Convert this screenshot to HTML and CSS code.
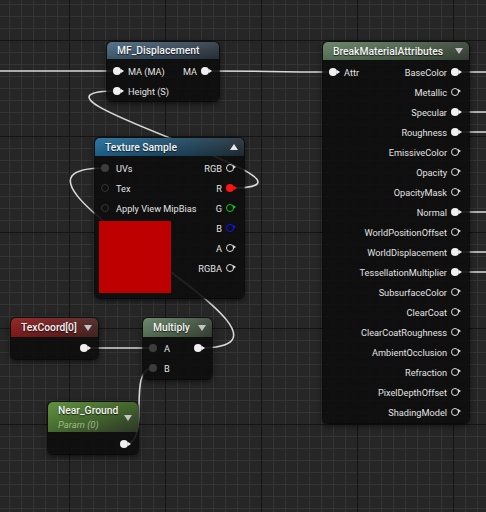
FILE: index.html
```html
<!DOCTYPE html>
<html lang="en">
  <head>
    <meta charset="UTF-8" />
    <title>Material Graph</title>
    <link rel="stylesheet" href="styles.css">
  </head>
  <body>
    <div class="graph">
      <!-- wires, drawn under the nodes -->
      <svg class="wires" width="486" height="512" viewBox="0 0 486 512">
        <g fill="none" stroke="#d9d9d9" stroke-width="1.6">
          <path d="M0 71 H117" />
          <path d="M205 71 C270 71 268 72 333 72" />
          <path d="M455 72 H486 M455 112 H486 M455 132 H486 M455 212 H486 M455 252 H486 M455 272 H486" />
          <path d="M230 188 C360 188 -13 91 117 91" />
          <path d="M199 348 C349 348 -45 168 105 168" />
          <path d="M85 348 H153" />
          <path d="M125 444 C152 444 126 368 153 368" />
        </g>
      </svg>

      <!-- MF_Displacement -->
      <div class="node mf-disp">
        <div class="head head-func"><span>MF_Displacement</span></div>
        <div class="body">
          <div class="row"><span class="pin"></span><span class="lbl">MA (MA)</span><span class="lbl out">MA</span><span class="pin"></span></div>
          <div class="row"><span class="pin"></span><span class="lbl">Height (S)</span></div>
        </div>
      </div>

      <!-- Texture Sample -->
      <div class="node tex-sample">
        <div class="head head-tex"><span>Texture Sample</span><span class="caret up"></span></div>
        <div class="body split">
          <div class="col col-in">
            <div class="row"><span class="pin dim"></span><span class="lbl">UVs</span></div>
            <div class="row"><span class="pin dimring"></span><span class="lbl">Tex</span></div>
            <div class="row"><span class="pin dimring"></span><span class="lbl">Apply View MipBias</span></div>
            <div class="swatch"></div>
          </div>
          <div class="col col-out">
            <div class="row"><span class="lbl">RGB</span><span class="pin hollow"></span></div>
            <div class="row"><span class="lbl">R</span><span class="pin red"></span></div>
            <div class="row"><span class="lbl">G</span><span class="pin hollow green"></span></div>
            <div class="row"><span class="lbl">B</span><span class="pin hollow blue"></span></div>
            <div class="row"><span class="lbl">A</span><span class="pin hollow"></span></div>
            <div class="row"><span class="lbl">RGBA</span><span class="pin hollow"></span></div>
          </div>
        </div>
      </div>

      <!-- BreakMaterialAttributes -->
      <div class="node break-attr">
        <div class="head head-green"><span>BreakMaterialAttributes</span><span class="caret"></span></div>
        <div class="body split tall">
          <div class="col col-in">
            <div class="row"><span class="pin"></span><span class="lbl">Attr</span></div>
          </div>
          <div class="col col-out">
            <div class="row"><span class="lbl">BaseColor</span><span class="pin"></span></div>
            <div class="row"><span class="lbl">Metallic</span><span class="pin hollow"></span></div>
            <div class="row"><span class="lbl">Specular</span><span class="pin"></span></div>
            <div class="row"><span class="lbl">Roughness</span><span class="pin"></span></div>
            <div class="row"><span class="lbl">EmissiveColor</span><span class="pin hollow"></span></div>
            <div class="row"><span class="lbl">Opacity</span><span class="pin hollow"></span></div>
            <div class="row"><span class="lbl">OpacityMask</span><span class="pin hollow"></span></div>
            <div class="row"><span class="lbl">Normal</span><span class="pin"></span></div>
            <div class="row"><span class="lbl">WorldPositionOffset</span><span class="pin hollow"></span></div>
            <div class="row"><span class="lbl">WorldDisplacement</span><span class="pin"></span></div>
            <div class="row"><span class="lbl">TessellationMultiplier</span><span class="pin"></span></div>
            <div class="row"><span class="lbl">SubsurfaceColor</span><span class="pin hollow"></span></div>
            <div class="row"><span class="lbl">ClearCoat</span><span class="pin hollow"></span></div>
            <div class="row"><span class="lbl">ClearCoatRoughness</span><span class="pin hollow"></span></div>
            <div class="row"><span class="lbl">AmbientOcclusion</span><span class="pin hollow"></span></div>
            <div class="row"><span class="lbl">Refraction</span><span class="pin hollow"></span></div>
            <div class="row"><span class="lbl">PixelDepthOffset</span><span class="pin hollow"></span></div>
            <div class="row"><span class="lbl">ShadingModel</span><span class="pin hollow"></span></div>
          </div>
        </div>
      </div>

      <!-- TexCoord[0] -->
      <div class="node tex-coord">
        <div class="head head-red"><span>TexCoord[0]</span><span class="caret"></span></div>
        <div class="body slim">
          <div class="row row-end"><span class="pin"></span></div>
        </div>
      </div>

      <!-- Multiply -->
      <div class="node multiply">
        <div class="head head-green"><span>Multiply</span><span class="caret"></span></div>
        <div class="body slim">
          <div class="row"><span class="pin dim"></span><span class="lbl">A</span><span class="pin push"></span></div>
          <div class="row"><span class="pin dim"></span><span class="lbl">B</span></div>
        </div>
      </div>

      <!-- Near_Ground param -->
      <div class="node near-ground">
        <div class="head head-param">
          <div class="titles">
            <span>Near_Ground</span>
            <span class="sub">Param (0)</span>
          </div>
          <span class="caret"></span>
        </div>
        <div class="body">
          <div class="row row-end"><span class="pin"></span></div>
        </div>
      </div>
    </div>
  </body>
</html>
```

FILE: styles.css
```css
body {
  margin: 0;
  font-family: Roboto, "Liberation Sans", sans-serif;
  background: #262626;
}

/* grid canvas */
.graph {
  position: relative;
  width: 486px;
  height: 512px;
  overflow: hidden;
  background-color: #262626;
  background-image:
    linear-gradient(to right, #151515 1px, transparent 1px),
    linear-gradient(to bottom, #151515 1px, transparent 1px),
    linear-gradient(to right, #343434 1px, transparent 1px),
    linear-gradient(to bottom, #343434 1px, transparent 1px);
  background-size: 96px 96px, 96px 96px, 12px 12px, 12px 12px;
  background-position: 69px 0, 0 40px, 9px 0, 0 4px;
}

.wires {
  position: absolute;
  left: 0;
  top: 0;
}

/* nodes */
.node {
  position: absolute;
  box-sizing: border-box;
  border-radius: 5px;
  background: rgba(13, 13, 13, 0.9);
  box-shadow: 0 0 0 1px rgba(0, 0, 0, 0.5), 0 2px 6px rgba(0, 0, 0, 0.7);
  color: #e2e2e2;
  font-size: 9.2px;
}

.mf-disp { left: 107px; top: 42px; width: 112px; }
.tex-sample { left: 95px; top: 138px; width: 149px; }
.break-attr { left: 323px; top: 42px; width: 146px; }
.tex-coord { left: 11px; top: 318px; width: 87px; }
.multiply { left: 143px; top: 318px; width: 69px; }
.near-ground { left: 48px; top: 402px; width: 90px; }

.head {
  display: flex;
  align-items: center;
  justify-content: space-between;
  height: 18px;
  padding: 0 6px 0 10px;
  border-radius: 5px 5px 0 0;
  font-size: 10.3px;
  font-weight: 500;
  color: #f4f4f4;
  text-shadow: 0 1px 1px rgba(0, 0, 0, 0.7);
}

.head-func {
  height: 17px;
  background:
    linear-gradient(to bottom, rgba(255, 255, 255, 0.1), rgba(0, 0, 0, 0.15)),
    linear-gradient(to right, #46657c, #35495a 60%, #2a353e);
}

.head-tex {
  background:
    linear-gradient(to bottom, rgba(255, 255, 255, 0.08), rgba(0, 0, 0, 0.15)),
    linear-gradient(to right, #1f6c9a, #1e4a66 55%, #232f38);
}

.head-green {
  background:
    linear-gradient(to bottom, rgba(255, 255, 255, 0.08), rgba(0, 0, 0, 0.15)),
    linear-gradient(to right, #62805f, #4b604a 60%, #3a4539);
}

.multiply .head, .tex-coord .head { height: 19px; }

.head-red {
  background:
    linear-gradient(to bottom, rgba(255, 255, 255, 0.06), rgba(0, 0, 0, 0.15)),
    linear-gradient(to right, #8e1c1c, #6a2020 60%, #4a2828);
}

.head-param {
  height: 30px;
  align-items: flex-start;
  padding-top: 2px;
  box-sizing: border-box;
  background: linear-gradient(160deg, #62923f, #42632d 55%, #2c3627);
}

.head-param .caret { margin-top: 11px; }

.titles {
  display: flex;
  flex-direction: column;
  line-height: 14px;
}

.sub {
  font-style: italic;
  font-weight: 400;
  font-size: 9.5px;
  color: #9ab884;
  text-shadow: none;
}

.caret {
  width: 0;
  height: 0;
  border-left: 4.5px solid transparent;
  border-right: 4.5px solid transparent;
  border-top: 6px solid #c4c4c4;
}

.caret.up {
  border-top: 0;
  border-bottom: 6px solid #e8e8e8;
}

/* body and rows */
.body {
  padding-top: 2px;
}

.body.slim {
  padding: 1px 0;
}

.split {
  display: flex;
  padding-bottom: 5px;
}

.split.tall {
  padding-bottom: 1px;
}

/* inputs may run under the outputs column; outputs stay flush right */
.col-in {
  flex: 1 1 0;
  min-width: 0;
}

.col-in .row {
  padding-right: 0;
}

.col-out {
  flex: 0 0 auto;
}

.col-out .row {
  justify-content: flex-end;
  padding-left: 0;
}

.row {
  display: flex;
  align-items: center;
  height: 20px;
  padding: 0 10px 0 6px;
}

.row-end {
  justify-content: flex-end;
}

.lbl {
  margin-left: 7px;
  white-space: nowrap;
}

.lbl.out {
  margin-left: auto;
}

.col-out .lbl,
.lbl.out {
  margin-right: 4px;
}

.push {
  margin-left: auto;
}

.swatch {
  width: 72px;
  height: 72px;
  margin: 3px 0 0 4px;
  background: #bf0000;
}

/* pins */
.pin {
  position: relative;
  flex: none;
  box-sizing: border-box;
  width: 8px;
  height: 8px;
  border-radius: 50%;
  background: #f0f0f0;
}

.pin::after {
  content: "";
  position: absolute;
  left: 7.5px;
  top: 2px;
  border-left: 3px solid #f0f0f0;
  border-top: 2px solid transparent;
  border-bottom: 2px solid transparent;
}

.pin.hollow {
  background: transparent;
  border: 1.6px solid #dcdcdc;
}

.pin.hollow::after {
  left: 5.9px;
  top: 0.4px;
  border-left-color: #dcdcdc;
}

.pin.red { background: #ff1212; }
.pin.red::after { border-left-color: #ff1212; }

.pin.green { border-color: #12d012; }
.pin.green::after { border-left-color: #12d012; }

.pin.blue { border-color: #1414ff; }
.pin.blue::after { border-left-color: #1414ff; }

.pin.dim {
  background: #3c3c3c;
}

.pin.dimring {
  background: transparent;
  border: 1.6px solid #353535;
}

.pin.dim::after,
.pin.dimring::after {
  display: none;
}
```
